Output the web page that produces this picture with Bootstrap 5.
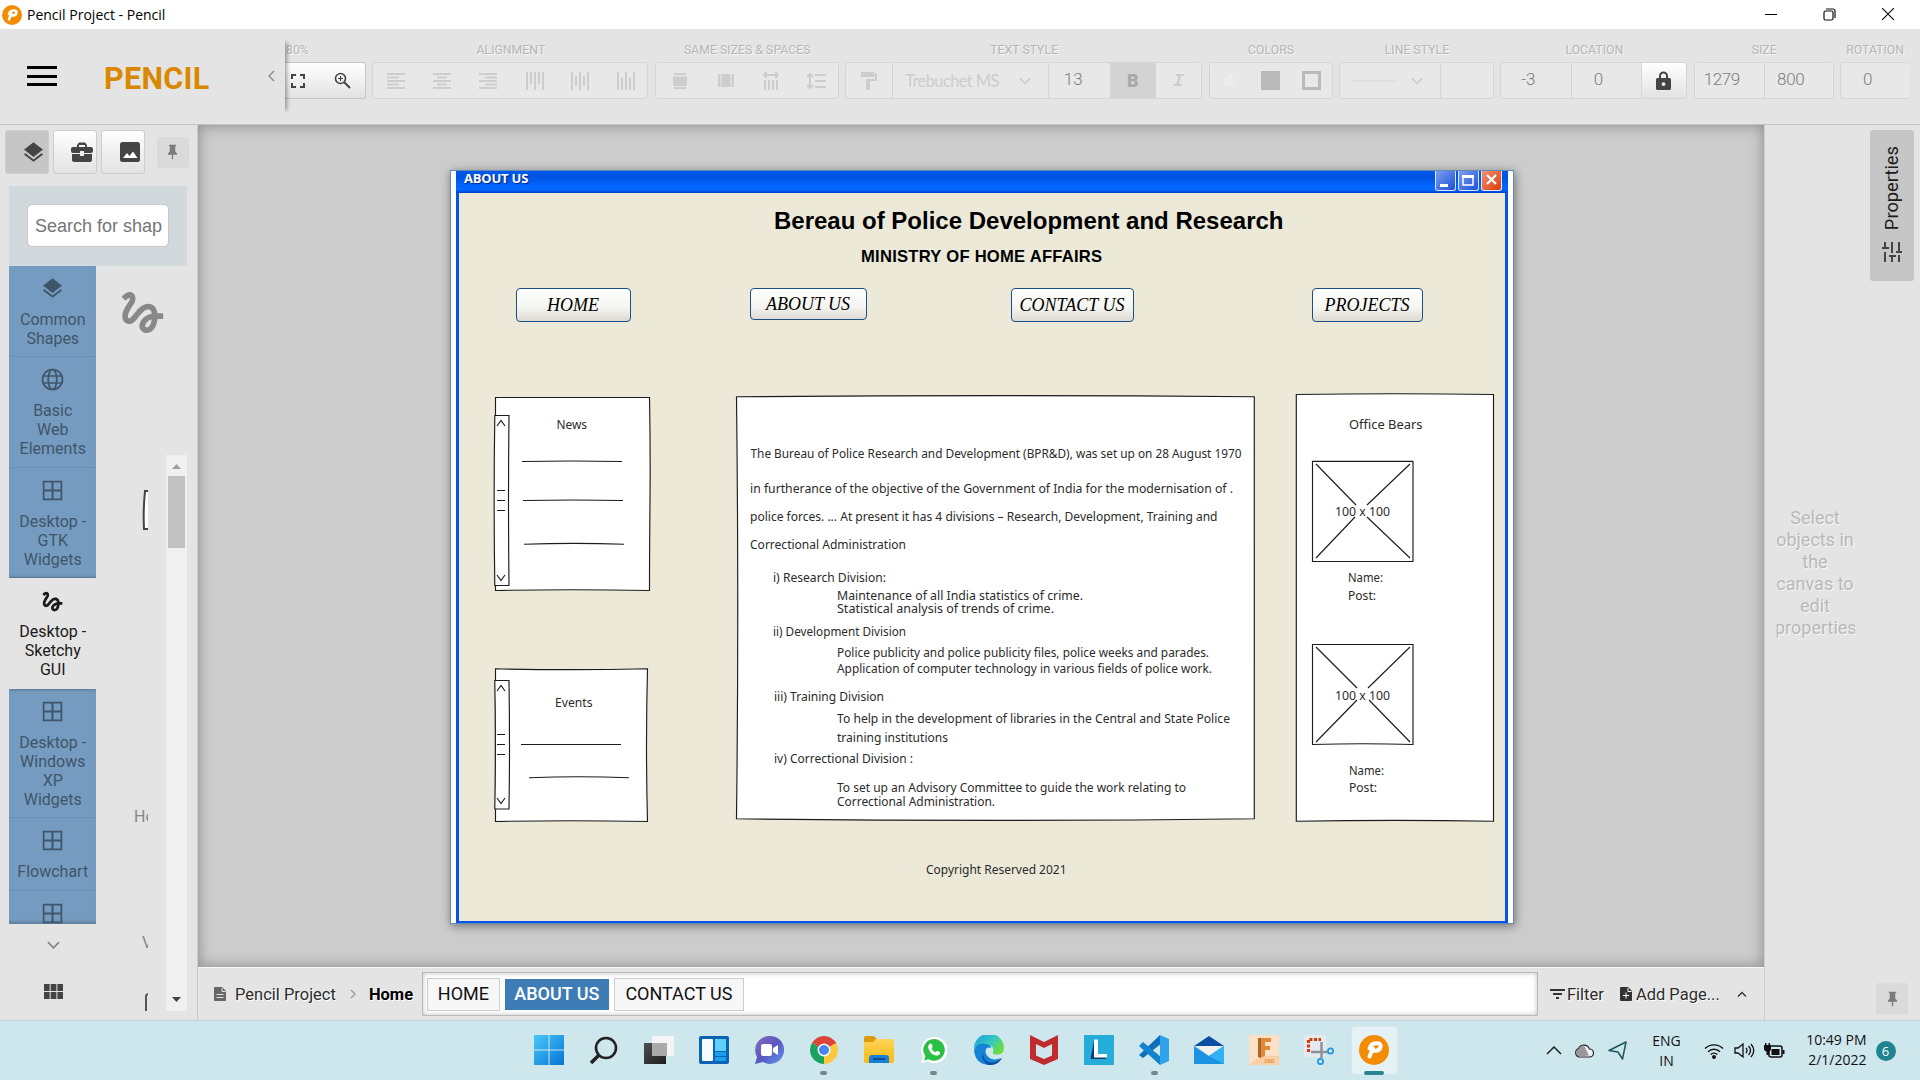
<!DOCTYPE html>
<html lang="en">
<head>
<meta charset="utf-8">
<title>Pencil Project - Pencil</title>
<link rel="stylesheet" href="https://cdn.jsdelivr.net/npm/bootstrap@5.3.0/dist/css/bootstrap.min.css">
<style>
html,body{height:100%;overflow:hidden}
body{width:1920px;height:1080px;font-family:Roboto,sans-serif;background:#e4e4e4;color:#222;line-height:1.2}
svg{display:block;flex:none}
.winbar{height:29px;background:#fff;font:14px "Open Sans",sans-serif;color:#000}
.winbar .ctl{width:58.5px}
.topbar{height:96px;border-bottom:1px solid #c3c3c3;background:#e4e4e4}
.brandbox{width:285px;height:72px;margin-top:11px;box-shadow:4px 0 4px -2px rgba(0,0,0,.35);clip-path:inset(0 -8px 0 0);position:relative;z-index:1}
.burger{width:30px;height:20px;border-top:3px solid #000;border-bottom:3px solid #000;margin:26px 0 0 27px}
.burger i{display:block;height:3px;margin-top:5.5px;background:#000}
.logo{font-size:30.5px;font-weight:700;line-height:36px;color:#d98800;margin:21px 0 0 47px;letter-spacing:.3px}
.tools{gap:6.4px;padding-top:12px}
.tg{position:relative}
.tg>label{display:block;height:21px;line-height:19px;font-size:12.3px;color:#b6b6b6;font-weight:400;text-align:center;text-shadow:1px 1px 0 #f6f6f6;white-space:nowrap;padding-left:1px}
.tg .box{height:37px;border:1px solid #d6d6d6;border-radius:3px;background:#e8e8e8;color:#cdcdcd;overflow:hidden}
.tg .box>*{display:flex;align-items:center;justify-content:center;flex:1 1 0}
.tg .box.live,.live{background:linear-gradient(#fff,#e2e2e2)!important;border-color:#c6c6c6;color:#444!important}
.nudge{margin-left:3px}
.sep{border-left:1px solid #d6d6d6}
.num{font-size:17px;font-weight:300;color:#7d7d7d}
.box .num{padding-bottom:3px}
.ledge{width:198px;border-right:1px solid #c9c9c9;background:#e4e4e4;padding:5px 0 0}
.tabbtn{width:44px;height:44px;border:1px solid #ccc;border-radius:3px;color:#444;padding:0 4px 0 0}
.tabbtn.on{background:#c6c6c6}
.pinbtn{width:32px;height:31px;border-radius:3px;background:#dadada;color:#7b7b7b}
.searchbox{margin:12px 10px 0 9px;height:80px;background:#d1d9dd;padding:18px}
.searchbox input{height:43px;border:1px solid #c9c9c9;border-radius:5px;font:18px "Liberation Sans",sans-serif;padding:1px 5px 0 7px;color:#757575}
.searchbox input::placeholder{color:#757575;opacity:1}
.cats{width:87px;height:658px;overflow:hidden;background:#759cc0;box-shadow:inset 0 -4px 4px -3px rgba(0,0,0,.3)}
.cat{padding:11px 0 8.5px .5px;color:#3f5569;font-size:16px;line-height:19px;text-align:center;border-bottom:1.5px solid #6a91b8}
.cat:first-child{padding-top:10.5px}
.cat svg{margin:0 auto 10px}
.cat.on{background:#e4e4e4;color:#1a1a1a;border:0;padding-bottom:9.5px;box-shadow:0 0 4px rgba(0,0,0,.4)}
.previews{width:52px;color:#888;font-size:16px}
.cut{width:52px;overflow:hidden}
.scr{width:21px;height:556px;background:#f0f0f0;margin:189px 0 0 18px}
.scr b{display:block;width:17px;height:72px;background:#c1c1c1;margin:0 auto}
.stage{height:842px;background:#ccc;box-shadow:inset 0 0 14px 1px rgba(0,0,0,.3);padding:45px 0 0 252px}
.paper{width:1064px;height:754px;border:1px solid #5f8db8;background:#fff;box-shadow:1px 2px 9px rgba(0,0,0,.45);padding:0 5px}
.xp{height:100%;border:solid #0356e8;border-width:0 3px 2px;background:#ece9d8}
.xpbar{height:22px;margin:0 -3px;background:linear-gradient(#0058ea,#0054e3 30%,#0064ff 65%,#0068ff 85%,#003ecb);color:#fff;padding:0 6px 0 8px;font:700 13px "Open Sans",sans-serif}
.xpbar span{text-shadow:1px 1px 1px #002a80;letter-spacing:-.2px;line-height:15px}
.xb{width:21px;height:20px;border:1px solid #dce6ff;border-top:0;border-radius:0 0 3px 3px;background:linear-gradient(135deg,#7b9ff0,#1c4fd8);margin-left:2px}
.xb.c{background:linear-gradient(135deg,#f09474,#db3c0c)}
.ttl{font:700 24px/28px "Liberation Sans",sans-serif;color:#000;margin:14px 0 0 315px;white-space:nowrap}
.sub{font:700 16.6px/20px "Liberation Sans",sans-serif;color:#000;margin:12px 0 0 402px;letter-spacing:.25px;white-space:nowrap}
.wb{height:34px;border:1.5px solid #1c4f86;border-radius:4px;background:linear-gradient(#fff,#f4f4f0 60%,#dcdad2);font:italic 18px/1 "Liberation Serif",serif;color:#000;padding:0 1px 0 0;white-space:nowrap}
.board text{font-family:"Noto Sans",sans-serif;font-size:12px;fill:#2b2b2b}
.board path,.board rect{stroke:#1c1c1c;stroke-width:1.15;fill:none}
.board .pn{fill:#fff}
.pages{height:53px;border-top:1px solid #f6f6f6;font-size:16.5px;color:#2c2c2c;text-shadow:1px 1px 0 #fff}
.pages>span,.pages>strong{padding-top:1px}
.pgbox{width:1116px;height:44px;border:1px solid #b9b9b9;background:#fff;box-shadow:inset 0 0 5px rgba(0,0,0,.25);padding:0 4px}
.pg{height:33px;border:1px solid #ccc;background:#f7f7f7;font-size:18px;line-height:29px;color:#111}
.pg.p-0{padding-bottom:2px!important}
.pg.on{background:#3d7cb5;border-color:#fff;color:#fff;font-weight:500;text-shadow:none}
.redge{width:156px;border-left:1px solid #cfcfcf;padding:5px 6px 0 0}
.prop{width:44px;height:151px;background:#c6c6c6;border-radius:3px;font-size:18.3px;color:#1c1c1c}
.prop span{writing-mode:vertical-rl;transform:rotate(180deg)}
.hint{font-size:18px;line-height:22px;color:#b9b9b9;text-align:center;width:80px;text-shadow:1px 1px 0 #f6f6f6;margin-left:10px;clip-path:inset(0 0 0 1.5px)}
.task{height:60px;background:#cee7ed;border-top:1px solid #bcd6dd;font:14px "Open Sans",sans-serif;color:#111}
.ti{width:55.07px;height:59px;position:relative;padding-bottom:2px}
.ti.dot::after{content:"";position:absolute;left:24px;bottom:5px;width:7px;height:4px;border-radius:2px;background:#75858c}
.ti.act::before{content:"";position:absolute;left:4px;top:5px;width:47px;height:49px;border-radius:4px;background:#e4f1f5;border:1px solid #d7e8ec}
.ti.act::after{content:"";position:absolute;left:17px;bottom:5px;width:20px;height:4px;border-radius:2px;background:#2a8493}
.ti svg{position:relative;z-index:1}
.note{width:20px;height:20px;border-radius:50%;background:#1f8391;color:#fff;font-size:13px}
</style>
<script src="https://cdn.jsdelivr.net/npm/bootstrap@5.3.0/dist/js/bootstrap.bundle.min.js"></script>
</head>
<body class="d-flex flex-column">
<svg width="0" height="0" class="position-absolute">
<defs>
<symbol id="layers" viewBox="0 0 24 24"><path fill="currentColor" d="M12 19.200 3.600 12.700 2 14l10 7.700L22 14l-1.600-1.300zM12 16.600l8.200-6.400L22 9l-10-7.700L2 9l1.800 1.300z"/></symbol>
<symbol id="grid4" viewBox="0 0 20 20"><path fill="none" stroke="currentColor" stroke-width="2" d="M1 1h18v18H1zM10 1v18M1 10h18"/></symbol>
<symbol id="squig" viewBox="0 0 24 24"><path fill="currentColor" d="M4.59 6.89c.7-.71 1.4-1.35 1.71-1.22.5.2 0 1.03-.3 1.52-.25.42-2.86 3.89-2.86 6.31 0 1.28.48 2.34 1.34 2.98.75.56 1.74.73 2.64.46 1.07-.31 1.95-1.4 3.06-2.77 1.21-1.49 2.83-3.44 4.08-3.44 1.63 0 1.65 1.01 1.76 1.79-3.78.64-5.38 3.67-5.38 5.37s1.44 3.09 3.21 3.09c1.63 0 4.29-1.33 4.69-6.1H21v-2.5h-2.47c-.15-1.65-1.09-4.2-4.03-4.2-2.25 0-4.18 1.91-4.94 2.84-.58.73-2.06 2.48-2.29 2.72-.25.3-.68.84-1.11.84-.45 0-.72-.83-.36-1.92.35-1.09 1.4-2.86 1.85-3.52.78-1.14 1.3-1.92 1.3-3.28C8.95 3.69 7.31 3 6.44 3 5.12 3 3.97 4 3.72 4.25c-.36.36-.66.66-.88.93l1.75 1.71zm9.29 11.66c-.31 0-.74-.26-.74-.72 0-.6.73-2.200 2.870-2.760-.3 2.690-1.430 3.480-2.130 3.480z"/></symbol>
<symbol id="pin" viewBox="0 0 12 16"><path fill="currentColor" d="M2 0h8v1.5H9v6l2 2V11H6.700v5H5.300v-5H1V9.500l2-2v-6H2z"/></symbol>
<symbol id="down" viewBox="0 0 14 8"><path fill="none" stroke="currentColor" stroke-width="2" d="M1 1l6 6 6-6"/></symbol>
<symbol id="plogo" viewBox="0 0 30 30"><circle cx="15" cy="15" r="15" fill="#f28c05"/><path d="M10.500 21.500L14 13.500M10.500 13.500Q12 8.500 17 8.200 22.500 8 21.500 12 20.500 16.500 14.500 15.500" fill="none" stroke="#fff" stroke-width="4" stroke-linecap="round" stroke-linejoin="round"/></symbol>
<linearGradient id="gb" x1="0" y1="0" x2="1" y2="1"><stop stop-color="#4cc8fb"/><stop offset="1" stop-color="#0473d3"/></linearGradient>
<linearGradient id="gd" x1="0" y1="0" x2="1" y2="1"><stop stop-color="#505050"/><stop offset="1" stop-color="#1d1d1d"/></linearGradient>
<linearGradient id="gy" x1="0" y1="0" x2="0" y2="1"><stop stop-color="#fdd45a"/><stop offset="1" stop-color="#fbb90d"/></linearGradient>
<linearGradient id="ge" x1="0" y1="0" x2="1" y2=".6"><stop stop-color="#1b9de2"/><stop offset=".6" stop-color="#34c8c0"/><stop offset="1" stop-color="#6ddc3f"/></linearGradient>
<linearGradient id="gp" x1="0" y1="0" x2="1" y2="1"><stop stop-color="#8a6db8"/><stop offset=".5" stop-color="#5a56c4"/><stop offset="1" stop-color="#5b9bea"/></linearGradient>
</defs></svg>

<header class="winbar d-flex align-items-center">
 <svg style="margin-left:2px" width="20" height="20"><use href="#plogo"/></svg>
 <span style="margin-left:5px">Pencil Project - Pencil</span>
 <div class="ms-auto d-flex" style="padding-right:3px">
  <div class="ctl d-flex justify-content-center"><svg width="12" height="14"><path d="M0 6.500h12" stroke="#000"/></svg></div>
  <div class="ctl d-flex justify-content-center"><svg width="13" height="13" fill="none" stroke="#111" stroke-width="1.200"><rect x="1" y="3" width="9" height="9" rx="1.500"/><path d="M3 1h7q2 0 2 2v7"/></svg></div>
  <div class="ctl d-flex justify-content-center"><svg width="12" height="12"><path d="M0 0l12 12M12 0L0 12" stroke="#111" stroke-width="1.200"/></svg></div>
 </div>
</header>

<nav class="topbar d-flex">
 <div class="brandbox d-flex flex-shrink-0">
  <div class="burger"><i></i></div><div class="logo">PENCIL</div>
  <svg class="ms-auto" style="margin:30px 10px 0 0" width="7" height="12"><path d="M6 1L1 6l5 5" fill="none" stroke="#888" stroke-width="1.300"/></svg>
 </div>
 <div class="tools d-flex">
  <div class="tg" style="width:81px"><label class="text-start">80%</label><div class="box live d-flex border-start-0 rounded-start-0">
   <span style="flex:0 0 25px"><svg width="14" height="14" fill="none" stroke="currentColor" stroke-width="2"><path d="M1 5V1h4M9 1h4v4M13 9v4H9M5 13H1V9"/></svg></span>
   <span><svg style="margin-left:10px" width="17" height="17" fill="none" stroke="currentColor" stroke-width="1.600"><circle cx="6.500" cy="6.500" r="5"/><path d="M10 10l6 6" stroke-width="2"/><path d="M4 6.500h5M6.500 4v5" stroke-width="1.200"/></svg></span></div></div>
  <div class="tg" style="width:276px"><label>ALIGNMENT</label><div class="box d-flex">
   <span><svg width="18" height="16" stroke="currentColor" stroke-width="2"><path d="M0 1h18M0 4.500h12M0 8h18M0 11.500h12M0 15h18"/></svg></span>
   <span><svg width="18" height="16" stroke="currentColor" stroke-width="2"><path d="M0 1h18M4 4.500h10M0 8h18M4 11.500h10M0 15h18"/></svg></span>
   <span><svg width="18" height="16" stroke="currentColor" stroke-width="2"><path d="M0 1h18M6 4.500h12M0 8h18M6 11.500h12M0 15h18"/></svg></span>
   <span><svg class="nudge" width="18" height="18" stroke="currentColor" stroke-width="2"><path d="M1 0v18M5 0v12M9 0v18M13 0v12M17 0v18"/></svg></span>
   <span><svg class="nudge" width="18" height="18" stroke="currentColor" stroke-width="2"><path d="M1 0v18M5 4v10M9 0v18M13 4v10M17 0v18"/></svg></span>
   <span><svg class="nudge" width="18" height="18" stroke="currentColor" stroke-width="2"><path d="M1 0v18M5 6v12M9 0v18M13 6v12M17 0v18"/></svg></span></div></div>
  <div class="tg" style="width:184px"><label>SAME SIZES &amp; SPACES</label><div class="box d-flex">
   <span><svg class="nudge" width="14" height="16" fill="currentColor"><path d="M1 0h12v2H1zM0 3.500h14v9.500H0zM1 14h12v2H1z"/></svg></span>
   <span><svg class="nudge" width="16" height="13" fill="currentColor"><path d="M0 0h2.500v13H0zM3.500 0h9v13h-9zM13.500 0H16v13h-2.500z"/></svg></span>
   <span><svg class="nudge" width="16" height="18" fill="none" stroke="currentColor" stroke-width="2"><path d="M1 3h14M3.500 0L1 3l2.500 3M12.500 0L15 3l-2.500 3M2 8v10M6 8v10M10 8v10M14 8v10"/></svg></span>
   <span><svg class="nudge" width="19" height="16" fill="none" stroke="currentColor" stroke-width="2"><path d="M3 1v14M0 4l3-3 3 3M0 12l3 3 3-3M8 2h11M8 8h11M8 14h11"/></svg></span></div></div>
  <div class="tg" style="width:357px"><label>TEXT STYLE</label><div class="box d-flex">
   <span style="flex:0 0 46px"><svg width="16" height="18" fill="currentColor"><path d="M0 0h13v5H0z"/><path d="M13 1.500h3V9H9v9H5V7h9V3h-1z"/></svg></span>
   <span class="sep" style="flex:0 0 156px;justify-content:space-between;padding:0 17px 0 12px;font:400 16.500px Lato"><em class="fst-normal" style="letter-spacing:-.6px">Trebuchet MS</em><svg width="12" height="8"><use href="#down"/></svg></span>
   <span class="sep num" style="flex:0 0 62px;padding-right:13px">13</span>
   <span style="background:#d3d3d3;color:#a8a8a8;font-weight:900;font-size:18px">B</span>
   <span style="font:italic 700 18px 'Liberation Mono'">I</span></div></div>
  <div class="tg" style="width:124px"><label>COLORS</label><div class="box d-flex">
   <span style="color:#eee;font-weight:700;font-size:17px">A</span>
   <span><svg width="19" height="19"><path fill="#bababa" d="M0 0h19v19H0z"/></svg></span>
   <span><svg width="19" height="19"><path fill="none" stroke="#bababa" stroke-width="3" d="M1.500 1.500h16v16h-16z"/></svg></span></div></div>
  <div class="tg" style="width:155px"><label>LINE STYLE</label><div class="box d-flex">
   <span style="flex:0 0 100px;justify-content:space-between;padding:0 17px 0 12px"><svg width="46" height="2"><path d="M0 1h46" stroke="#e0e0e0" stroke-width="2"/></svg><svg width="12" height="8"><use href="#down"/></svg></span><span class="sep"></span></div></div>
  <div class="tg" style="width:187px"><label>LOCATION</label><div class="box d-flex">
   <span class="num" style="flex:0 0 70px;padding-right:16px">-3</span><span class="sep num" style="flex:0 0 70px;padding-right:17px">0</span>
   <span class="live sep" style="padding-right:2px"><svg width="15" height="19" fill="currentColor"><path d="M1.500 7H3V5a4.500 4.500 0 0 1 9 0v2h1.500Q15 7 15 8.500v9Q15 19 13.500 19h-12Q0 19 0 17.500v-9Q0 7 1.500 7zM5 7h5V5a2.500 2.500 0 0 0-5 0zm2.500 4.200a1.900 1.900 0 1 0 .1 0z"/></svg></span></div></div>
  <div class="tg" style="width:140px"><label>SIZE</label><div class="box d-flex">
   <span class="num" style="flex:0 0 69px;padding-right:15px;letter-spacing:-.4px">1279</span><span class="sep num" style="padding-right:16px;letter-spacing:-.3px">800</span></div></div>
  <div class="tg" style="width:69px"><label>ROTATION</label><div class="box d-flex border-end-0"><span class="num" style="padding-right:15px">0</span></div></div>
 </div>
</nav>

<main class="d-flex" style="height:895px">
 <aside class="ledge flex-shrink-0">
  <div class="d-flex align-items-center" style="padding-left:5px;gap:4px">
   <button class="tabbtn on d-flex align-items-center justify-content-end"><svg width="23" height="23" style="margin-right:-1px"><use href="#layers"/></svg></button>
   <button class="tabbtn live d-flex align-items-center justify-content-end"><svg width="22" height="20" fill="currentColor" style="margin-right:-1px"><path d="M9 12H1v6q0 2 2 2h16q2 0 2-2v-6h-8v2H9zM20 5h-4V3l-2-2.500H8L6 3v2H2Q0 5 0 7v2q0 2 2 2h7V9h4v2h7q2 0 2-2V7q0-2-2-2zM8 5V3h6v2z"/></svg></button>
   <button class="tabbtn live d-flex align-items-center justify-content-end"><svg width="20" height="20"><rect width="20" height="20" rx="2.500" fill="currentColor"/><path d="M3 16l4-5 2.500 3L13 9.500 17.500 16z" fill="#fff"/></svg></button>
   <div class="pinbtn d-flex align-items-center justify-content-center" style="margin-left:7.500px"><svg width="11" height="16"><use href="#pin"/></svg></div>
  </div>
  <div class="searchbox"><input class="form-control" placeholder="Search for shap" aria-label="Search"></div>
  <div class="d-flex">
   <div style="margin-left:9px">
    <div class="cats">
     <div class="cat"><svg width="23" height="23"><use href="#layers"/></svg>Common<br>Shapes</div>
     <div class="cat"><svg width="23" height="23" viewBox="0 0 23 23" fill="none" stroke="currentColor" stroke-width="1.700"><circle cx="11.500" cy="11.500" r="10"/><ellipse cx="11.500" cy="11.500" rx="4.300" ry="10"/><path d="M2.500 8h18M2.500 15h18"/></svg>Basic<br>Web<br>Elements</div>
     <div class="cat"><svg width="23" height="23" viewBox="-1.500 -1.500 23 23"><use href="#grid4" width="20" height="20"/></svg>Desktop -<br>GTK<br>Widgets</div>
     <div class="cat on"><svg width="23" height="23" viewBox="1.500 .5 21 21"><use href="#squig" width="24" height="24"/></svg>Desktop -<br>Sketchy<br>GUI</div>
     <div class="cat"><svg width="23" height="23" viewBox="-1.500 -1.500 23 23"><use href="#grid4" width="20" height="20"/></svg>Desktop -<br>Windows<br>XP<br>Widgets</div>
     <div class="cat"><svg width="23" height="23" viewBox="-1.500 -1.500 23 23"><use href="#grid4" width="20" height="20"/></svg>Flowchart</div>
     <div class="cat"><svg width="23" height="23" viewBox="-1.500 -1.500 23 23"><use href="#grid4" width="20" height="20"/></svg></div>
    </div>
    <div class="d-flex flex-column align-items-center" style="color:#444;padding-left:1px"><svg width="13" height="8" style="margin:17px 0 35px;color:#8a8a8a"><use href="#down"/></svg>
    <svg width="19" height="15" fill="currentColor"><path d="M0 0h5.700v7H0zM6.700 0h5.700v7H6.700zM13.400 0H19v7h-5.600zM0 8h5.700v7H0zM6.700 8h5.700v7H6.700zM13.400 8H19v7h-5.600z"/></svg></div>
   </div>
   <div class="previews">
    <svg width="55" height="55" style="margin:19px 0 0 19px"><use href="#squig"/></svg>
    <svg width="52" height="44" style="margin-top:149px"><path d="M54 2H49q-2 20-1 38h6" fill="#fff" stroke="#444" stroke-width="2"/></svg>
    <div class="cut" style="margin-top:274px;padding-left:38px;white-space:nowrap;height:126px">Ho</div>
    <div class="cut" style="padding-left:46px;height:60px">V</div>
    <svg width="52" height="18"><path d="M54 1q-4 0-4 2v15" fill="none" stroke="#555" stroke-width="2"/></svg>
   </div>
   <div class="scr d-flex flex-column"><svg width="21" height="21"><path d="M6 14l4.500-5 4.500 5z" fill="#a0a0a0"/></svg><b></b><svg class="mt-auto" width="21" height="21"><path d="M6 7l4.500 5 4.500-5z" fill="#444"/></svg></div>
  </div>
 </aside>

 <section style="width:1566px">
  <div class="stage">
   <div class="paper"><div class="xp">
    <div class="xpbar d-flex"><span class="me-auto">ABOUT US</span>
     <div class="xb"><svg width="19" height="19"><path d="M4 13h8v3H4z" fill="#fff"/></svg></div>
     <div class="xb"><svg width="19" height="19"><path d="M4 5h10v9H4z" fill="none" stroke="#fff" stroke-width="1.500"/><path d="M3 4h12v3H3z" fill="#fff"/></svg></div>
     <div class="xb c"><svg width="19" height="19"><path d="M5 4l9 9M14 4l-9 9" stroke="#fff" stroke-width="2.200"/></svg></div></div>
    <h1 class="ttl">Bereau of Police Development and Research</h1>
    <h2 class="sub">MINISTRY OF HOME AFFAIRS</h2>
    <div class="d-flex" style="margin:21px 0 0 57px">
     <button class="wb" style="width:115px">HOME</button>
     <button class="wb" style="width:117px;height:32px;margin-left:119px">ABOUT US</button>
     <button class="wb" style="width:123px;margin-left:144px">CONTACT US</button>
     <button class="wb" style="width:111px;margin-left:178px">PROJECTS</button>
    </div>
    <svg class="board" width="1046" height="598" viewBox="459 322 1046 598">
     <path class="pn" d="M495.500 397.500H649.500Q650.500 450 650 500T649.500 590.500Q570 589 495.500 590.500Z"/>
     <path class="pn" d="M494.800 415.500H509Q508 500 509 585.500H494.800Q493.500 500 494.800 415.500Z"/>
     <path d="M497 426l4-5.500 4 5.500M497 575l4 5.500 4-5.500M497 490.500h8M497 500.500h8M497 510.500h8M522 461.500Q572 460.500 622 461.500M523 500.500Q573 499.500 623 500.500M524 544.300Q574 542.500 624 544.300"/>
     <text x="556.500" y="429" textLength="30.500" lengthAdjust="spacingAndGlyphs">News</text>
     <path class="pn" d="M495.500 668.800Q570 670.500 647.500 668.800Q645.500 745 647.500 821.500Q570 820 495.500 821.500Z"/>
     <path class="pn" d="M494.800 680.500H509Q510 745 509 809H494.800Q496 745 494.800 680.500Z"/>
     <path d="M497 691l4-5.500 4 5.500M497 798l4 5.500 4-5.500M497 734.500h8M497 744.500h8M497 754.500h8M521 744.500h100M529 777.700Q579 775.800 629 777.700"/>
     <text x="555" y="707" textLength="37.500" lengthAdjust="spacingAndGlyphs">Events</text>
     <path class="pn" d="M736.500 396.800Q995 394.500 1254.300 396.800Q1255 610 1254.300 818.800Q995 822 736.500 818.800Q739 610 736.500 396.800Z"/>
     <g>
      <text x="750.500" y="458" textLength="491" lengthAdjust="spacingAndGlyphs">The Bureau of Police Research and Development (BPR&amp;D), was set up on 28 August 1970</text>
      <text x="750" y="493" textLength="483" lengthAdjust="spacingAndGlyphs">in furtherance of the objective of the Government of India for the modernisation of .</text>
      <text x="750" y="521" textLength="467.500" lengthAdjust="spacingAndGlyphs">police forces. ... At present it has 4 divisions – Research, Development, Training and</text>
      <text x="750" y="549" textLength="156" lengthAdjust="spacingAndGlyphs">Correctional Administration</text>
      <text x="773" y="582" textLength="113" lengthAdjust="spacingAndGlyphs">i) Research Division:</text>
      <text x="837" y="600" textLength="246" lengthAdjust="spacingAndGlyphs">Maintenance of all India statistics of crime.</text>
      <text x="837" y="613" textLength="217" lengthAdjust="spacingAndGlyphs">Statistical analysis of trends of crime.</text>
      <text x="773" y="636" textLength="133" lengthAdjust="spacingAndGlyphs">ii) Development Division</text>
      <text x="837" y="657" textLength="372" lengthAdjust="spacingAndGlyphs">Police publicity and police publicity files, police weeks and parades.</text>
      <text x="837" y="673" textLength="375" lengthAdjust="spacingAndGlyphs">Application of computer technology in various fields of police work.</text>
      <text x="774" y="701" textLength="110" lengthAdjust="spacingAndGlyphs">iii) Training Division</text>
      <text x="837" y="723" textLength="393" lengthAdjust="spacingAndGlyphs">To help in the development of libraries in the Central and State Police</text>
      <text x="837" y="742" textLength="111" lengthAdjust="spacingAndGlyphs">training institutions</text>
      <text x="774" y="763" textLength="139" lengthAdjust="spacingAndGlyphs">iv) Correctional Division :</text>
      <text x="837" y="792" textLength="349" lengthAdjust="spacingAndGlyphs">To set up an Advisory Committee to guide the work relating to</text>
      <text x="837" y="806" textLength="158" lengthAdjust="spacingAndGlyphs">Correctional Administration.</text>
     </g>
     <text x="926" y="874" textLength="140.500" lengthAdjust="spacingAndGlyphs">Copyright Reserved 2021</text>
     <path class="pn" d="M1296.300 394.500Q1395 393 1493.500 394.500V821.300Q1395 819.500 1296.300 821.300Q1297 600 1296.300 394.500Z"/>
     <text x="1349" y="429" textLength="73.500" lengthAdjust="spacingAndGlyphs">Office Bears</text>
     <path d="M1312.500 461.300H1413V561.500H1312.500ZM1316 464l40 41M1410 464l-43 41M1316 558l39-41M1410 558l-43-41"/>
     <text x="1335" y="516" textLength="55" lengthAdjust="spacingAndGlyphs">100 x 100</text>
     <text x="1348" y="582" textLength="35" lengthAdjust="spacingAndGlyphs">Name:</text>
     <text x="1348" y="600" textLength="28" lengthAdjust="spacingAndGlyphs">Post:</text>
     <path d="M1312.500 644.500H1413V744.500Q1363 743 1312.500 744.500ZM1316 647l41 41M1410 647l-42 41M1316 742l41-42M1410 742l-41-42"/>
     <text x="1335" y="700" textLength="55" lengthAdjust="spacingAndGlyphs">100 x 100</text>
     <text x="1349" y="775" textLength="35" lengthAdjust="spacingAndGlyphs">Name:</text>
     <text x="1349" y="792" textLength="28" lengthAdjust="spacingAndGlyphs">Post:</text>
    </svg>
   </div></div>
  </div>
  <footer class="pages d-flex align-items-center">
   <svg style="margin:0 9px 0 16px" width="12" height="14"><path d="M1 0h7l4 4v9q0 1-1 1H1q-1 0-1-1V1q0-1 1-1z" fill="#666"/><path d="M2.500 7.500h7M2.500 10.500h7M8 1v3.500h3.500" stroke="#e4e4e4" fill="none"/></svg>
   <span>Pencil Project</span>
   <svg style="margin:0 13px 0 14px" width="6" height="10"><path d="M1 1l4 4-4 4" fill="none" stroke="#999" stroke-width="1.300"/></svg>
   <strong class="text-black" style="width:53px">Home</strong>
   <div class="pgbox d-flex align-items-center" style="gap:4px">
    <button class="pg p-0" style="width:73px">HOME</button><button class="pg on p-0" style="width:106px">ABOUT US</button><button class="pg p-0" style="width:130px">CONTACT US</button></div>
   <svg style="margin-left:12px" width="15" height="10" stroke="#333" stroke-width="2"><path d="M0 1h15M3 5h9M6 9h3"/></svg><span style="margin-left:2px;width:53px">Filter</span>
   <svg width="12" height="14" style="margin-right:4px"><path d="M1 0h7l4 4v9q0 1-1 1H1q-1 0-1-1V1q0-1 1-1z" fill="#333"/><path d="M3 8.500h6M6 5.500v6M8 1v3.500h3.500" stroke="#fff" fill="none"/></svg><span style="width:101px">Add Page...</span>
   <svg width="10" height="6"><path d="M1 5.500l4-4 4 4" fill="none" stroke="#333" stroke-width="1.300"/></svg>
  </footer>
 </section>

 <aside class="redge d-flex flex-column">
  <div class="prop ms-auto d-flex flex-column align-items-center justify-content-end" style="padding-bottom:19px;gap:12px"><span>Properties</span>
   <svg width="20" height="20" fill="none" stroke="#444" stroke-width="2"><path d="M3 0v6M0 6h7M3 10v10M10 0v11M7 14h7M10 14v6M17 0v10M14 10h6M17 13v7"/></svg></div>
  <div class="hint" style="margin-top:226px">Select objects in the canvas to edit properties</div>
  <div class="mt-auto d-flex justify-content-end" style="padding:0 6px 6px 0"><div class="pinbtn d-flex align-items-center justify-content-center"><svg width="11" height="16"><use href="#pin"/></svg></div></div>
 </aside>
</main>

<footer class="task d-flex align-items-center">
 <div class="d-flex" style="margin-left:521px">
  <div class="ti d-flex align-items-center justify-content-center"><svg width="30" height="30" fill="url(#gb)"><path d="M0 0h14.500v14.500H0zM15.500 0H30v14.500H15.500zM0 15.500h14.500V30H0zM15.500 15.500H30V30H15.500z"/></svg></div>
  <div class="ti d-flex align-items-center justify-content-center"><svg width="28" height="28" fill="none" stroke="#222" stroke-width="2.600"><circle cx="16" cy="12" r="10"/><path d="M9 19l-8 8" stroke-width="3.500"/></svg></div>
  <div class="ti d-flex align-items-center justify-content-center"><svg width="30" height="28"><path fill="url(#gd)" d="M0 7h22v21H0z"/><path fill="#f4f4f4" d="M8 0h22v20H23V7H8z"/><path d="M8 7h15v13H8z" fill="#aaa"/></svg></div>
  <div class="ti d-flex align-items-center justify-content-center"><svg width="30" height="28"><rect width="30" height="28" rx="2" fill="#0c63b4"/><rect x="3" y="3" width="11" height="22" rx="1" fill="#f5fbff"/><path fill="#5fd0fb" d="M16 3h11v12H16z"/><path fill="#1c9df0" d="M16 16h11v4H16zM16 21h11v4H16z"/></svg></div>
  <div class="ti d-flex align-items-center justify-content-center"><svg width="30" height="30"><path fill="url(#gp)" d="M15 1a14 14 0 1 1-6 26l-8 2 2-7A14 14 0 0 1 15 1z"/><rect x="7" y="9" width="11" height="12" rx="2" fill="#fff"/><path d="M19 13l5-3v10l-5-3z" fill="#fff"/></svg></div>
  <div class="ti dot d-flex align-items-center justify-content-center"><svg width="28" height="28" viewBox="-14 -14 28 28"><path fill="#db4437" d="M0 0L-12.100-7A14 14 0 0 1 12.100-7z"/><path fill="#fdc93b" d="M0 0L12.100-7A14 14 0 0 1 0 14z"/><path fill="#1aa260" d="M0 0L0 14A14 14 0 0 1-12.100-7z"/><path fill="#db4437" d="M0-6.500H12.400L10-10-6-10z"/><path fill="#fdc93b" d="M5.600 3.300L0 14l5 -1 5-8z"/><circle r="6.500" fill="#fff"/><circle r="5" fill="#4687f4"/></svg></div>
  <div class="ti d-flex align-items-center justify-content-center"><svg width="30" height="27"><path d="M0 2q0-2 2-2h8l3 3-3 4H0z" fill="#dd9a0c"/><path d="M0 6h9l3-3h16q2 0 2 2v20q0 2-2 2H2q-2 0-2-2z" fill="url(#gy)"/><path d="M5 27v-5q0-3 3-3h14q3 0 3 3v5z" fill="#1680d8"/><path d="M9 23h12" stroke="#0a4f96" stroke-width="2"/></svg></div>
  <div class="ti dot d-flex align-items-center justify-content-center"><svg width="26" height="26" viewBox="0 0 28 28"><path d="M14 0a14 14 0 1 1-6.500 26L0 28l2-7A14 14 0 0 1 14 0z" fill="#fff"/><path d="M14 2.200a11.700 11.700 0 1 1-6 21.800l-4.600 1.300 1.300-4.600A11.700 11.700 0 0 1 14 2.200z" fill="#28c045"/><path d="M9 7.500q2-1.500 3 1l.6 2-1.400 1.700q1.300 3 4.600 4.300l1.600-1.800 3.200 1.600q-.2 4-4.600 3.700Q9 18 7.700 11q0-2 1.300-3.500z" fill="#fff"/></svg></div>
  <div class="ti d-flex align-items-center justify-content-center"><svg width="30" height="30"><path d="M0 14A15 15 0 0 1 30 13q0 6.500-7 6.500-5 0-4-2.500 1.500-5-3-6Q7 8 0 14z" fill="url(#ge)"/><path d="M0 15Q4 7 12 9q5 1 5 4-5-2-5.500 3 0 5 5 7.500 5 2 10.500-.5-5 7-12 7Q1 29 0 15z" fill="#1583d8"/><path d="M11.500 14q-5 6 1 12 7 4 14.500-2.500 1-.5.500.5Q23 31 14 30 4 24 11.500 14z" fill="#0c4fa0"/></svg></div>
  <div class="ti d-flex align-items-center justify-content-center"><svg width="28" height="30"><path fill="#c02c2d" d="M0 0l14 7 14-7v24l-14 6-14-6zM6 9v11.500l8 3.500 8-3.500V9l-8 4z" fill-rule="evenodd"/></svg></div>
  <div class="ti d-flex align-items-center justify-content-center"><svg width="30" height="30"><path fill="#25add9" d="M0 0h30v30H0z"/><path d="M10 5l2 15 10 2v2H6.500z" fill="#0d3d70"/><path d="M10 4.500h4V19h9v3.500H10z" fill="#fff"/></svg></div>
  <div class="ti dot d-flex align-items-center justify-content-center"><svg width="30" height="30"><path d="M21 0l2 8L4 23l-4-3z" fill="#0f6fb8"/><path d="M4 7l18 15-1 8L0 11z" fill="#1483cf"/><path d="M21 0l9 4v22l-9 4z" fill="#2ea3ec"/></svg></div>
  <div class="ti d-flex align-items-center justify-content-center"><svg width="30" height="28"><path d="M0 10L15 0l15 10z" fill="#0a4fa0"/><path d="M3 10h24L15 20z" fill="#f2f2f2"/><path d="M0 10l15 10 15-10v18H0z" fill="#1d92e2"/><path d="M15 20l15-10v18z" fill="#2fb2f2"/></svg></div>
  <div class="ti d-flex align-items-center justify-content-center"><svg width="30" height="30"><path d="M0 0h30v30H0z" fill="#fce1c8"/><path d="M0 30q12-12 30-9v9z" fill="#fbcfa3"/><path d="M11 3h11v4h-6v4h5v4h-5v6l-5 2z" fill="#e28a35"/><path d="M9 3h3v20l-3-1z" fill="#a8662c"/><text x="15" y="28" font-size="6" font-family="Roboto" font-weight="500" fill="#e58b35">360</text></svg></div>
  <div class="ti d-flex align-items-center justify-content-center"><svg width="30" height="30"><rect width="22" height="22" rx="3" fill="#e6e9ed"/><path d="M4.500 17V4.500H17" fill="none" stroke="#d6380c" stroke-width="3" stroke-dasharray="3 1.500"/><path d="M17.500 7v16M7 17h17" stroke="#8d9298" stroke-width="2.500"/><circle cx="26.500" cy="16" r="2.600" fill="none" stroke="#2397e0" stroke-width="1.800"/><circle cx="16.500" cy="26.500" r="2.600" fill="none" stroke="#2397e0" stroke-width="1.800"/></svg></div>
  <div class="ti act d-flex align-items-center justify-content-center"><svg width="30" height="30"><use href="#plogo"/></svg></div>
 </div>
 <div class="d-flex align-items-center" style="margin-left:143.500px">
  <svg width="16" height="9"><path d="M1 8l7-7 7 7" fill="none" stroke="#222" stroke-width="1.500"/></svg>
  <svg style="margin:0 14px 0 12px" width="20" height="15"><path d="M5 14a4.500 4.500 0 0 1-.5-8.500 6 6 0 0 1 11 .5A4 4 0 0 1 15.500 14z" fill="#f2f2f2" stroke="#222" stroke-width="1.200"/><path d="M5 13.500a4 4 0 0 1-.5-7.500q2-4 5.500-3.500l5 10z" fill="#999"/></svg>
  <svg width="19" height="19"><path d="M18 1l-3.500 17-4.500-7-9-1.500z" fill="none" stroke="#1d5560" stroke-width="1.500" stroke-linejoin="round"/></svg>
  <div class="text-center" style="margin-left:25px;width:30px;line-height:20px">ENG<br>IN</div>
  <svg style="margin-left:22px" width="20" height="16" fill="none" stroke="#111" stroke-width="1.400"><path d="M1 5.500a13 13 0 0 1 18 0M4 8.700a8.500 8.500 0 0 1 12 0M6.700 11.600a4.500 4.500 0 0 1 6.600 0"/><circle cx="10" cy="14" r="1.300" fill="#111"/></svg>
  <svg style="margin-left:10px" width="21" height="17" fill="none" stroke="#111" stroke-width="1.300"><path d="M1 6h3l5-4v13l-5-4H1zM12 6q2 2.500 0 5M14.500 4q4 4.500 0 9M17 2q5.500 6.500 0 13"/></svg>
  <svg style="margin-left:9px" width="21" height="15"><rect x="5" y="3" width="13" height="11" rx="2" fill="none" stroke="#111" stroke-width="1.500"/><path d="M7.500 6h8v6h-8zM18.500 7h2v4h-2zM0 2h7v4q0 2-2 2.500V12H2.500V8.500Q0 8 0 6zM1 0h1.500v3H1zM4.500 0H6v3H4.500z" fill="#111"/></svg>
  <div class="text-end" style="margin-left:13px;width:69px;line-height:20px;padding-bottom:2px">10:49 PM<br>2/1/2022</div>
  <div class="note d-flex align-items-center justify-content-center" style="margin-left:9px">6</div>
 </div>
</footer>
</body>
</html>
